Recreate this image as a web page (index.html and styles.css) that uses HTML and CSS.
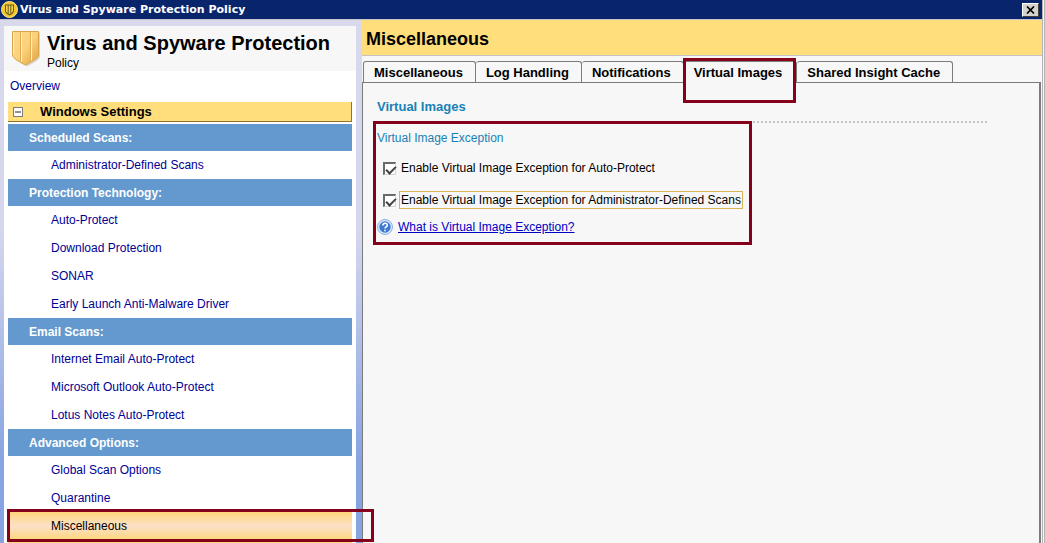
FILE: index.html
```html
<!DOCTYPE html>
<html lang="en">
<head>
    <meta charset="UTF-8">
    <meta name="viewport" content="width=device-width, initial-scale=1.0">
    <title>Virus and Spyware Protection Policy</title>
    <link rel="stylesheet" href="styles.css">
</head>
<body>
    <header class="titlebar">
        <svg class="titlebar-icon" viewBox="0 0 17 17" aria-hidden="true">
            <circle cx="8.5" cy="8.5" r="8" fill="#f3c62c" stroke="#fbe88e"/>
            <path d="M4 3.500h9v6.500c0 2-2 3.200-4.500 4.500C6 13.200 4 12 4 10z" fill="#6b5a1c"/>
            <path d="M5 4.500h1.700v7.500C5.600 11.400 5 10.800 5 10zM7.700 4.500h1.600v8.500h-1.600zM10.300 4.500H12V10c0 .8-.6 1.400-1.700 2z" fill="#f5d04a"/>
        </svg>
        <span class="titlebar-text">Virus and Spyware Protection Policy</span>
        <button class="close" type="button" aria-label="Close">
            <svg viewBox="0 0 9 8" aria-hidden="true"><path d="M1 0.500l7 7M8 0.500l-7 7" stroke="#000" stroke-width="1.700"/></svg>
        </button>
    </header>

    <div class="window">
        <aside class="sidebar">
            <div class="panel">
                <div class="policy">
                    <svg class="shield" viewBox="0 0 30 37" aria-hidden="true">
                        <defs>
                            <linearGradient id="gold" x1="0" y1="0" x2="1" y2="1">
                                <stop offset="0" stop-color="#fbd889"/>
                                <stop offset="0.500" stop-color="#fbd27c"/>
                                <stop offset="1" stop-color="#dfa03c"/>
                            </linearGradient>
                        </defs>
                        <path d="M3 2.500h26v24c0 3-6 6-12.500 10C9 33 3 30 3 26.500z" fill="#d9d5cc"/>
                        <path d="M1.500 1.500h26v23.500c0 3.500-6 6-13 10-7-4-13-6.500-13-10z" fill="url(#gold)" stroke="#d9a650"/>
                        <path d="M9.500 2v29M19.500 2v29" stroke="#e3ac50"/>
                        <path d="M2.500 2.500v22M10.500 2.500v29M20.500 2.500v28" stroke="#fff0c4"/>
                    </svg>
                    <div>
                        <h1>Virus and Spyware Protection</h1>
                        <p>Policy</p>
                    </div>
                </div>
                <a class="overview" href="#">Overview</a>
                <nav class="menu">
                    <button class="group" type="button" aria-expanded="true">
                        <svg viewBox="0 0 10 10" aria-hidden="true">
                            <rect x="0.500" y="0.500" width="9" height="9" fill="#fff" stroke="#7d7d7d"/>
                            <path d="M2 5h6" stroke="#222"/>
                        </svg>
                        Windows Settings
                    </button>
                    <h2>Scheduled Scans:</h2>
                    <a href="#">Administrator-Defined Scans</a>
                    <h2>Protection Technology:</h2>
                    <a href="#">Auto-Protect</a>
                    <a href="#">Download Protection</a>
                    <a href="#">SONAR</a>
                    <a href="#">Early Launch Anti-Malware Driver</a>
                    <h2>Email Scans:</h2>
                    <a href="#">Internet Email Auto-Protect</a>
                    <a href="#">Microsoft Outlook Auto-Protect</a>
                    <a href="#">Lotus Notes Auto-Protect</a>
                    <h2>Advanced Options:</h2>
                    <a href="#">Global Scan Options</a>
                    <a href="#">Quarantine</a>
                    <a class="selected" href="#">Miscellaneous</a>
                    <div class="next-group"></div>
                </nav>
            </div>
        </aside>

        <main class="content">
            <h2 class="page-title">Miscellaneous</h2>
            <div class="tabs" role="tablist">
                <button type="button" role="tab">Miscellaneous</button>
                <button type="button" role="tab">Log Handling</button>
                <button type="button" role="tab">Notifications</button>
                <button class="active" type="button" role="tab" aria-selected="true">Virtual Images</button>
                <button type="button" role="tab">Shared Insight Cache</button>
            </div>
            <section class="tab-panel">
                <h3>Virtual Images</h3>
                <div class="exception">
                    <h4>Virtual Image Exception</h4>
                    <div class="option">
                        <input type="checkbox" id="auto-protect" checked>
                        <label for="auto-protect">Enable Virtual Image Exception for Auto-Protect</label>
                    </div>
                    <div class="option">
                        <input type="checkbox" id="admin-scans" checked>
                        <label class="focused" for="admin-scans">Enable Virtual Image Exception for Administrator-Defined Scans</label>
                    </div>
                    <div class="help">
                        <svg viewBox="0 0 16 16" aria-hidden="true">
                            <circle cx="8" cy="8" r="7.500" fill="#dbe8fa" stroke="#8fb0e0"/>
                            <circle cx="8" cy="8" r="5.700" fill="#3f7ad2"/>
                            <path d="M5.800 6.500c0-3 4.600-3 4.500-.3 0 1.600-2.200 1.500-2.200 3.300M8 10.700v1.500" fill="none" stroke="#fff" stroke-width="1.600"/>
                        </svg>
                        <a href="#">What is Virtual Image Exception?</a>
                    </div>
                </div>
            </section>
        </main>
    </div>
</body>
</html>
```
FILE: styles.css
```css
:root {
    --navy: #08246b;
    --gold: #ffde7b;
    --blue: #6399ce;
    --link: #000094;
    --teal: #1881b5;
    --grey: #f7f7f7;
    --line: #7b7b7b;
    --mark: #84001b;
}

* {
    box-sizing: border-box;
    margin: 0;
    padding: 0;
}

body {
    height: 100vh;
    display: flex;
    flex-direction: column;
    overflow: hidden;
    font-family: "Liberation Sans", Arial, sans-serif;
    font-size: 12px;
    color: #000;
    background-color: var(--grey);
    border-right: 3px double #b5b2b5;
}

button {
    border: none;
    background: none;
    font: inherit;
}

/* Title bar */
.titlebar {
    display: flex;
    align-items: center;
    flex-shrink: 0;
    height: 20px;
    padding: 0 3px 0 1px;
    background-color: var(--navy);
    border-bottom: 1px solid #c6c3ce;
}

.titlebar-icon {
    width: 17px;
    height: 17px;
    margin-right: 2px;
}

.titlebar-text {
    flex: 1;
    font-family: "DejaVu Sans", Tahoma, sans-serif;
    font-size: 11px;
    font-weight: bold;
    color: #fff;
}

.close {
    display: flex;
    align-items: center;
    justify-content: center;
    width: 17px;
    height: 14px;
    background-color: #d6d3ce;
    border: 1px solid;
    border-color: #fff #424142 #424142 #fff;
}

.close svg {
    width: 9px;
    height: 8px;
}

.window {
    flex: 1;
    display: flex;
    min-height: 0;
}

/* Sidebar */
.sidebar {
    position: relative;
    flex: 0 0 362px;
    padding: 6px 6px 0 4px;
    background: linear-gradient(#d9d9ec, #d5d7ee 40%, #86a3e2 85%);
}

.panel {
    height: 100%;
    background-color: #fff;
}

.policy {
    display: flex;
    gap: 6px;
    height: 45px;
    padding: 4px 0 0 7px;
    background-color: var(--grey);
}

.shield {
    width: 30px;
    height: 37px;
}

.policy h1 {
    font-size: 20px;
    line-height: 26px;
    white-space: nowrap;
}

.policy p {
    line-height: 14px;
}

.overview {
    display: block;
    height: 31px;
    padding-left: 6px;
    line-height: 31px;
    color: var(--link);
    text-decoration: none;
}

.menu {
    padding: 0 4px;
}

.group {
    display: flex;
    align-items: center;
    gap: 17px;
    width: 100%;
    height: 20px;
    margin-bottom: 2px;
    padding-left: 5px;
    font-size: 13px;
    font-weight: bold;
    background-color: var(--gold);
    border: solid #8c7531;
    border-width: 0 1px 1px 0;
}

.group svg {
    width: 10px;
    height: 10px;
}

.menu h2 {
    height: 27px;
    padding-left: 21px;
    font-size: 12px;
    line-height: 28px;
    color: #fff;
    background-color: var(--blue);
}

.menu a {
    display: block;
    height: 28px;
    padding-left: 43px;
    line-height: 28px;
    color: var(--link);
    text-decoration: none;
}

.menu .selected {
    position: relative;
    color: #000;
    background: linear-gradient(#ffd67b, #fbe0c8 50%, #ffd67b);
}

.next-group {
    height: 20px;
    margin-top: 1px;
    background-color: #ffd67b;
}

/* Red callout frames */
.menu .selected::after,
.tabs .active::after,
.exception::after {
    content: '';
    position: absolute;
    inset: 0;
    border: 3px solid var(--mark);
    pointer-events: none;
    z-index: 1;
}

.menu .selected::after {
    inset: -3px -22px -2px -1px;
}

.tabs .active::after {
    inset: -4px 0 -20px -1px;
}

/* Content */
.content {
    flex: 1;
    display: flex;
    flex-direction: column;
    min-width: 0;
}

.page-title {
    height: 36px;
    padding-left: 4px;
    font-size: 18px;
    line-height: 38px;
    font-weight: bold;
    background-color: var(--gold);
    border-bottom: 1px solid #c6c3c6;
}

.tabs {
    display: flex;
    height: 26px;
    padding: 5px 0 0 1px;
}

.tabs button {
    padding: 0 12px 0 10px;
    font-size: 13px;
    font-weight: bold;
    white-space: nowrap;
    border: 1px solid var(--line);
    border-left-width: 0;
    border-bottom: none;
    border-radius: 3px 3px 0 0;
}

.tabs button:first-child {
    border-left-width: 1px;
}

.tabs .active {
    position: relative;
    margin-bottom: -1px;
    padding: 0 14px 0 10px;
    background-color: var(--grey);
}

.tab-panel {
    flex: 1;
    margin-right: 1px;
    padding-top: 16px;
    border: solid var(--line);
    border-width: 1px 2px 0 1px;
}

.tab-panel h3 {
    height: 24px;
    margin: 0 52px 0 14px;
    font-size: 13px;
    line-height: 16px;
    color: var(--teal);
    border-bottom: 2px dotted #c6c3c6;
}

.exception {
    position: relative;
    width: 379px;
    height: 124px;
    margin: -2px 0 0 10px;
    padding: 10px 4px;
}

.exception h4 {
    font-size: 12px;
    font-weight: normal;
    line-height: 14px;
    color: var(--teal);
}

.option {
    display: flex;
    align-items: center;
    gap: 3px;
    margin-top: 14px;
    padding-left: 6px;
    white-space: nowrap;
}

.option input {
    appearance: none;
    width: 13px;
    height: 13px;
    background: #fff;
    border: solid;
    border-width: 2px 1px 1px 2px;
    border-color: #6b696b #d6d3ce #d6d3ce #6b696b;
}

.option input:checked::before {
    content: '';
    display: block;
    width: 8px;
    height: 4px;
    margin: 2px 1px;
    border: solid #444;
    border-width: 0 0 2px 2px;
    transform: rotate(-45deg);
}

.option label {
    padding: 0 1px;
    line-height: 16px;
    border: 1px solid transparent;
}

.option .focused {
    border-color: #d6b552;
}

.help {
    display: flex;
    align-items: center;
    gap: 5px;
    margin-top: 10px;
}

.help svg {
    width: 16px;
    height: 16px;
}

.help a {
    color: #0000c6;
}
```
